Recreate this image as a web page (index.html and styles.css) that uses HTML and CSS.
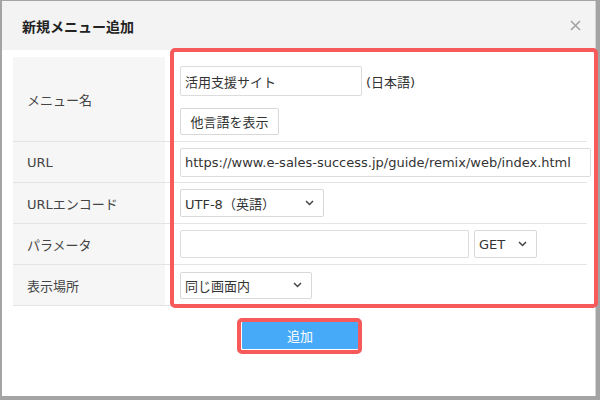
FILE: index.html
```html
<!DOCTYPE html>
<html lang="ja">
<head>
  <meta charset="UTF-8">
  <meta name="viewport" content="width=device-width, initial-scale=1.0">
  <title>新規メニュー追加</title>
  <link rel="stylesheet" href="styles.css">
</head>
<body>
  <div class="dialog">
    <div class="dialog-head">
      <h1>新規メニュー追加</h1>
      <button class="close" aria-label="閉じる">
        <svg width="11" height="11" viewBox="0 0 11 11"><path d="M1 1 L10 10 M10 1 L1 10" stroke="#a3a3a3" stroke-width="1.6" fill="none"/></svg>
      </button>
    </div>

    <div class="dialog-body">
      <div class="form-table">
        <div class="row row-name">
          <div class="label">メニュー名</div>
          <div class="value stack">
            <div class="line">
              <input class="field name" type="text" value="活用支援サイト">
              <span class="note">(日本語)</span>
            </div>
            <button class="sub-btn">他言語を表示</button>
          </div>
        </div>
        <div class="row">
          <div class="label">URL</div>
          <div class="value">
            <input class="field url" type="text" value="https://www.e-sales-success.jp/guide/remix/web/index.html">
          </div>
        </div>
        <div class="row">
          <div class="label">URLエンコード</div>
          <div class="value">
            <div class="select encode">
              <span>UTF-8（英語）</span>
              <svg width="9" height="6" viewBox="0 0 9 6"><path d="M1 1 L4.5 4.5 L8 1" stroke="#444" stroke-width="1.5" fill="none"/></svg>
            </div>
          </div>
        </div>
        <div class="row">
          <div class="label">パラメータ</div>
          <div class="value">
            <input class="field param" type="text" value="">
            <div class="select method">
              <span>GET</span>
              <svg width="9" height="6" viewBox="0 0 9 6"><path d="M1 1 L4.5 4.5 L8 1" stroke="#444" stroke-width="1.5" fill="none"/></svg>
            </div>
          </div>
        </div>
        <div class="row">
          <div class="label">表示場所</div>
          <div class="value">
            <div class="select place">
              <span>同じ画面内</span>
              <svg width="9" height="6" viewBox="0 0 9 6"><path d="M1 1 L4.5 4.5 L8 1" stroke="#444" stroke-width="1.5" fill="none"/></svg>
            </div>
          </div>
        </div>
      </div>

      <div class="actions">
        <button class="primary">追加</button>
      </div>
    </div>
  </div>

  <!-- 注目箇所の赤枠 -->
  <div class="mark mark-form"></div>
  <div class="mark mark-button"></div>
</body>
</html>
```

FILE: styles.css
```css
body {
  margin: 0;
  width: 600px;
  height: 400px;
  background: #a4a4a4;
  font-family: "DejaVu Sans", "Noto Sans CJK JP", sans-serif;
  font-size: 13px;
  color: #444;
  position: relative;
  overflow: hidden;
}

.dialog {
  margin: 1px 0 0 2px;
  width: 593px;
  height: 395px;
  background: #fff;
  box-shadow: 1px 0 0 #d4d4d4;
}

.dialog-head {
  height: 49px;
  background: #f3f3f3;
  display: flex;
  align-items: center;
  justify-content: space-between;
  padding: 0 14px 0 20px;
}

.dialog-head h1 {
  margin: 0;
  font-size: 14px;
  font-weight: bold;
  color: #222;
  font-family: "Noto Sans CJK JP", sans-serif;
}

.close {
  border: none;
  background: none;
  padding: 0;
  width: 11px;
  height: 11px;
  display: flex;
  cursor: pointer;
}

.dialog-body {
  padding: 7px 0 0 11px;
}

.form-table {
  width: 574px;
}

.row {
  display: grid;
  grid-template-columns: 152px 1fr;
  height: 40px;
  border-bottom: 1px solid #e4e4e4;
}

.row-name {
  height: 84px;
}

.label {
  background: #f6f6f6;
  display: flex;
  align-items: center;
  padding-left: 14px;
  color: #444;
}

.value {
  display: flex;
  align-items: center;
  gap: 5px;
  padding-left: 15px;
}

.value.stack {
  flex-direction: column;
  align-items: flex-start;
  justify-content: flex-start;
  padding-top: 9px;
  gap: 12px;
}

.line {
  display: flex;
  align-items: center;
  gap: 4px;
}

.field {
  box-sizing: border-box;
  height: 29px;
  border: 1px solid #dcdcdc;
  border-radius: 2px;
  padding: 0 4px;
  font: inherit;
  color: #333;
  background: #fff;
  outline: none;
}

.field.name {
  width: 182px;
  height: 30px;
}

.field.url {
  width: 411px;
}

.field.param {
  width: 289px;
  height: 28px;
}

.note {
  color: #333;
}

.sub-btn {
  box-sizing: border-box;
  width: 99px;
  height: 27px;
  border: 1px solid #d8d8d8;
  border-radius: 2px;
  background: #fff;
  font: inherit;
  color: #333;
  padding: 0;
}

.select {
  box-sizing: border-box;
  height: 28px;
  border: 1px solid #d8d8d8;
  border-radius: 2px;
  display: flex;
  align-items: center;
  justify-content: space-between;
  padding: 0 9px 0 4px;
  color: #333;
  background: #fff;
}

.select.encode {
  width: 144px;
}

.select.method {
  width: 63px;
}

.select.place {
  width: 132px;
  height: 27px;
}

.actions {
  display: flex;
  justify-content: center;
  padding: 16px 8px 0 0;
}

.primary {
  width: 116px;
  height: 27px;
  border: none;
  background: #46aaf8;
  color: #fff;
  font: inherit;
  border-radius: 1px;
}

.mark {
  position: absolute;
  border: 4px solid #f65a5a;
  border-radius: 5px;
  box-sizing: border-box;
}

.mark-form {
  left: 170px;
  top: 48px;
  width: 428px;
  height: 260px;
}

.mark-button {
  left: 237px;
  top: 318px;
  width: 125px;
  height: 36px;
}
```
